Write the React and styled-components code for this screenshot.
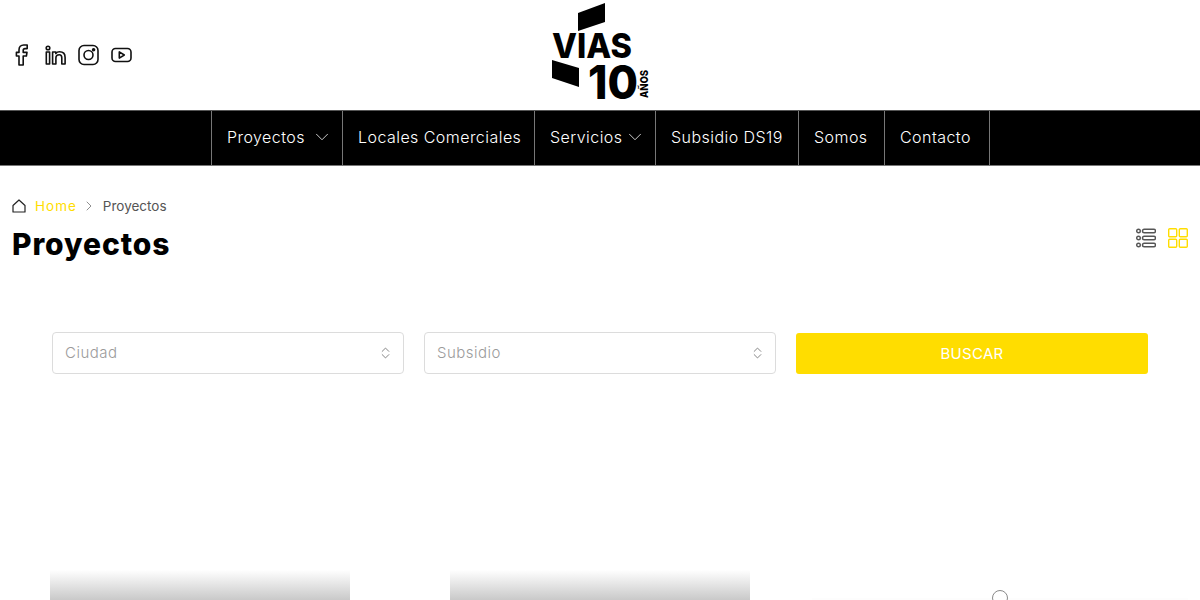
import styled, { createGlobalStyle } from "styled-components";
import { FiChevronDown, FiChevronRight } from "react-icons/fi";

const GlobalStyle = createGlobalStyle`
  html, body {
    margin: 0;
    background: #fff;
    overflow: hidden;
    font-family: "Inter", "Noto Sans", sans-serif;
  }
  * {
    box-sizing: border-box;
  }
`;

const Page = styled.div`
  height: 600px;
  overflow: hidden;
`;

const Header = styled.header`
  height: 110px;
  display: grid;
  grid-template-columns: 1fr 100px 1fr;
  align-items: center;
  padding: 0 12px;
`;

const Socials = styled.div`
  display: flex;
  align-items: center;
  gap: 12px;
`;

const SocialIcon = styled.svg`
  width: 21px;
  height: 22px;
  fill: none;
  stroke: #111;
  stroke-width: 1.6;
  stroke-linejoin: round;
`;

const Logo = styled.svg`
  width: 100px;
  height: 110px;
  display: block;
`;

const LogoText = styled.text`
  font-family: "Inter", "Liberation Sans", sans-serif;
  font-weight: 800;
  fill: #000;
`;

const Nav = styled.nav`
  height: 56px;
  background: #000;
  border-top: 1px solid #555;
  border-bottom: 1px solid #777;
  display: flex;
  justify-content: center;
  padding-left: 1px;
`;

const NavItem = styled.a`
  display: flex;
  align-items: center;
  justify-content: space-between;
  padding: 0 15px 2px;
  border-left: 1px solid #777;
  color: #fff;
  font-size: 16px;
  letter-spacing: 0.45px;
  font-weight: 300;
  width: ${(p) => p.$w}px;
  white-space: nowrap;

  &:last-child {
    border-right: 1px solid #777;
  }

  svg {
    flex: none;
    margin-right: -6px;
    color: #ddd;
  }
`;

const TitleRow = styled.section`
  display: flex;
  justify-content: space-between;
  align-items: flex-start;
  padding: 31px 12px 0;
`;

const Breadcrumb = styled.div`
  display: flex;
  align-items: center;
  height: 18px;
  font-size: 13.5px;
  color: #444;

  svg {
    flex: none;
  }
`;

const HomeIcon = styled.svg`
  width: 14px;
  height: 14px;
  fill: none;
  stroke: #222;
  stroke-width: 1.2;
  stroke-linejoin: round;
`;

const Crumb = styled.span`
  color: ${(p) => (p.$active ? "#ffdd00" : "#555")};
  letter-spacing: ${(p) => (p.$active ? "1px" : "0")};
  margin-left: ${(p) => p.$gap}px;
`;

const Separator = styled(FiChevronRight)`
  margin-left: 4px;
  color: #666;
`;

const Title = styled.h1`
  margin: 10px 0 0;
  font-size: 30px;
  line-height: 38px;
  font-weight: 800;
  letter-spacing: 0.9px;
  color: #000;
`;

const ViewSwitch = styled.div`
  display: flex;
  gap: 12px;
  margin-top: 30px;
`;

const ViewIcon = styled.svg`
  width: 20px;
  height: 22px;
  fill: none;
  stroke: ${(p) => p.$color};
  stroke-width: 1.4;
`;

const Filters = styled.form`
  display: grid;
  grid-template-columns: repeat(3, 352px);
  gap: 20px;
  justify-content: center;
  margin-top: 69px;
`;

const Select = styled.div`
  height: 42px;
  border: 1px solid #dcdcdc;
  border-radius: 4px;
  padding: 0 13px 1px 12px;
  display: flex;
  align-items: center;
  justify-content: space-between;
  font-size: 15px;
  letter-spacing: 0.5px;
  color: #9b9b9b;
  font-weight: 300;
`;

const SortIcon = styled.svg`
  width: 9px;
  height: 12px;
  fill: none;
  stroke: #777;
  stroke-width: 1;
`;

const SearchButton = styled.button`
  height: 41px;
  margin-top: 1px;
  border: 0;
  border-radius: 3px;
  background: #ffdd00;
  color: #fff;
  font: 400 15px "Inter", sans-serif;
  letter-spacing: 0.3px;
`;

const Cards = styled.section`
  display: grid;
  grid-template-columns: repeat(3, 300px);
  gap: 100px;
  justify-content: center;
  margin-top: 196px;
`;

const CardImage = styled.div`
  height: 120px;
  background: linear-gradient(#ffffff 0, #c9c9c9 30px, #c9c9c9 100%);
`;

const LoadingCard = styled.div`
  position: relative;
  height: 120px;
  margin: 28px -38px 0;
  background: #fdfdfd;
  display: flex;
  justify-content: center;
`;

const Spinner = styled.span`
  position: absolute;
  top: -8px;
  width: 16px;
  height: 16px;
  border: 1.5px solid #8a8a8a;
  border-radius: 50%;
  background: #fff;
`;

const sortPath = "M1 5 5 1l4 4M1 8l4 4 4-4";

const App = () => {
  return (
    <Page>
      <GlobalStyle />
      <Header>
        <Socials>
          <SocialIcon viewBox="0 0 21 22">
            <path d="M7 21V12H4.400V8.400H7V6C7 3 8.800 1 11.800 1h3.400v3.600h-2.200c-1.200 0-1.800.5-1.800 1.800v2h3.800l-.6 3.600H11.200V21Z" />
          </SocialIcon>
          <SocialIcon viewBox="0 0 21 22">
            <circle cx="3" cy="4" r="1.800" />
            <path d="M1.300 8h3.300v12H1.300ZM7.600 8h3.200v1.600C11.600 8.500 13 7.800 14.500 7.800c3.600 0 5.600 2 5.600 5.600V20h-3.300v-6.200c0-2-.9-3-2.500-3-1.700 0-3.400 1-3.400 3V20H7.600Z" />
          </SocialIcon>
          <SocialIcon viewBox="0 0 21 22">
            <rect x="1" y="1.500" width="19" height="19" rx="5" />
            <circle cx="10.500" cy="11" r="4.500" />
            <circle cx="15.600" cy="5.800" r="1" fill="#111" />
          </SocialIcon>
          <SocialIcon viewBox="0 0 21 22">
            <rect x="1" y="4.500" width="19" height="13" rx="3.500" />
            <path d="M8.300 7.900v6.200l5-3.100Z" />
          </SocialIcon>
        </Socials>
        <Logo viewBox="0 0 100 110">
          <polygon points="28,13 55,3 55,22 28,31" fill="#000" />
          <LogoText x="2" y="58" fontSize="34" textLength="80" lengthAdjust="spacingAndGlyphs">VIAS</LogoText>
          <polygon points="2,60 29,68 29,87 2,78" fill="#000" />
          <LogoText x="38" y="99" fontSize="46" textLength="50" lengthAdjust="spacingAndGlyphs">10</LogoText>
          <LogoText x="98" y="98" fontSize="11" transform="rotate(-90 98 98)" textLength="28" lengthAdjust="spacingAndGlyphs">AÑOS</LogoText>
        </Logo>
        <span />
      </Header>
      <Nav>
        <NavItem $w={131}>Proyectos <FiChevronDown size={22} strokeWidth={1} /></NavItem>
        <NavItem $w={192}>Locales Comerciales</NavItem>
        <NavItem $w={121}>Servicios <FiChevronDown size={22} strokeWidth={1} /></NavItem>
        <NavItem $w={143}>Subsidio DS19</NavItem>
        <NavItem $w={86}>Somos</NavItem>
        <NavItem $w={106}>Contacto</NavItem>
      </Nav>
      <TitleRow>
        <div>
          <Breadcrumb>
            <HomeIcon viewBox="0 0 14 14">
              <path d="M1 6.500 7 1l6 5.500V13H1Z" />
            </HomeIcon>
            <Crumb $active $gap={9}>Home</Crumb>
            <Separator size={16} strokeWidth={1.1} />
            <Crumb $gap={6}>Proyectos</Crumb>
          </Breadcrumb>
          <Title>Proyectos</Title>
        </div>
        <ViewSwitch>
          <ViewIcon viewBox="0 0 20 22" $color="#555">
            <circle cx="2.500" cy="4" r="1.800" />
            <circle cx="2.500" cy="11" r="1.800" />
            <circle cx="2.500" cy="18" r="1.800" />
            <rect x="6.500" y="2.200" width="13" height="3.600" rx="1.800" />
            <rect x="6.500" y="9.200" width="13" height="3.600" rx="1.800" />
            <rect x="6.500" y="16.200" width="13" height="3.600" rx="1.800" />
          </ViewIcon>
          <ViewIcon viewBox="0 0 20 22" $color="#ffdd00">
            <rect x="0.700" y="1.700" width="8" height="8" rx="1" />
            <rect x="11.300" y="1.700" width="8" height="8" rx="1" />
            <rect x="0.700" y="12.300" width="8" height="8" rx="1" />
            <rect x="11.300" y="12.300" width="8" height="8" rx="1" />
          </ViewIcon>
        </ViewSwitch>
      </TitleRow>
      <Filters>
        <Select>
          Ciudad
          <SortIcon viewBox="0 0 10 13"><path d={sortPath} /></SortIcon>
        </Select>
        <Select>
          Subsidio
          <SortIcon viewBox="0 0 10 13"><path d={sortPath} /></SortIcon>
        </Select>
        <SearchButton type="button">BUSCAR</SearchButton>
      </Filters>
      <Cards>
        <CardImage />
        <CardImage />
        <LoadingCard>
          <Spinner />
        </LoadingCard>
      </Cards>
    </Page>
  );
};

export default App;
